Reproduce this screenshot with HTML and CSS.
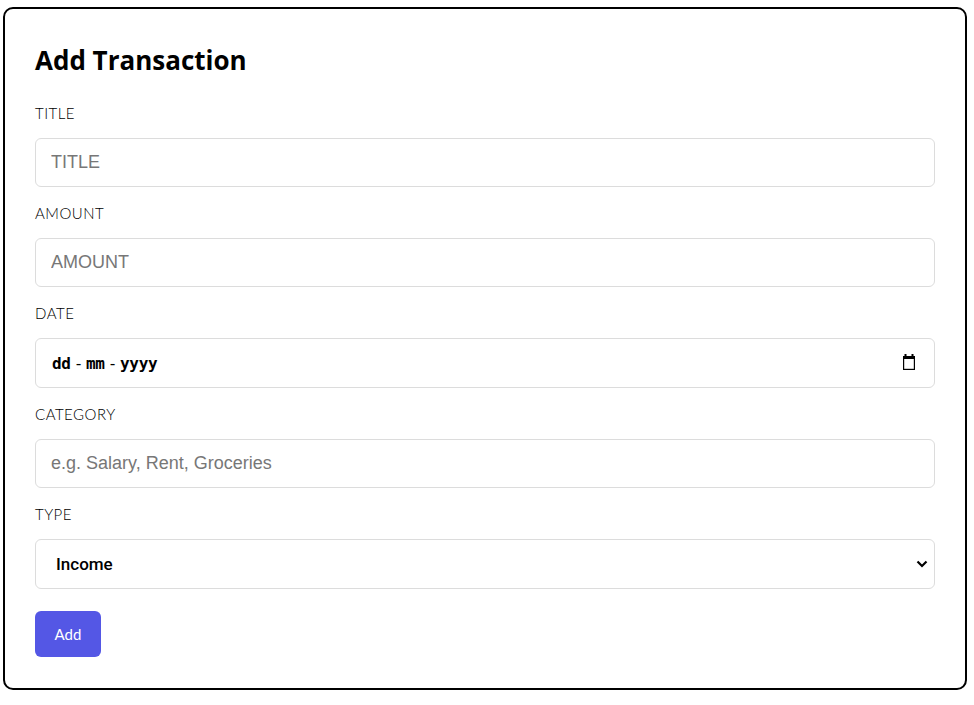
FILE: index.html
```html
<!DOCTYPE html>
<html lang="en">
<head>
<meta charset="utf-8">
<title>Add Transaction</title>
<link rel="stylesheet" href="styles.css">
</head>
<body>
<form class="card">
  <h2 class="card-title">Add Transaction</h2>
  <div class="field">
    <label class="field-label" for="title">TITLE</label>
    <input class="field-input" id="title" type="text" placeholder="TITLE">
  </div>
  <div class="field">
    <label class="field-label" for="amount">AMOUNT</label>
    <input class="field-input" id="amount" type="text" placeholder="AMOUNT">
  </div>
  <div class="field">
    <label class="field-label" for="date">DATE</label>
    <div class="field-input date-box" id="date">
      <span class="date-text"><span>dd</span><span class="date-sep">-</span><span>mm</span><span class="date-sep">-</span><span>yyyy</span></span>
      <svg class="cal-icon" width="14" height="16" viewBox="0 0 14 16" aria-hidden="true">
        <rect x="2.5" y="0" width="2" height="3" fill="#000"/>
        <rect x="9.5" y="0" width="2" height="3" fill="#000"/>
        <rect x="1" y="2" width="12" height="3" fill="#000"/>
        <rect x="1.6" y="2.6" width="10.8" height="12.8" fill="none" stroke="#000" stroke-width="1.2"/>
      </svg>
    </div>
  </div>
  <div class="field">
    <label class="field-label" for="category">CATEGORY</label>
    <input class="field-input" id="category" type="text" placeholder="e.g. Salary, Rent, Groceries">
  </div>
  <div class="field">
    <label class="field-label" for="type">TYPE</label>
    <select class="field-input select-input" id="type">
      <option>Income</option>
      <option>Expense</option>
    </select>
  </div>
  <button class="add-btn" type="button">Add</button>
</form>
</body>
</html>
```
FILE: styles.css
```css
* { box-sizing: border-box; }
html, body { margin: 0; padding: 0; background: #fff; }
body {
  font-family: "Lato", "Liberation Sans", sans-serif;
  color: #000;
  padding: 7px 7px 0 3px;
}
.card {
  border: 2px solid #000;
  border-radius: 10px;
  padding: 30px 30px 31px;
  background: #fff;
}
.card-title {
  margin: 0 0 24px;
  font-family: "Open Sans", "Lato", sans-serif;
  font-size: 26px;
  font-weight: 700;
  line-height: 42px;
  letter-spacing: 0;
}
.field {
  display: flex;
  flex-direction: column;
}
.field-label {
  font-size: 15px;
  font-weight: 300;
  line-height: 17px;
  margin-bottom: 16px;
  letter-spacing: 0.5px;
}
.field-input {
  height: 49px;
  border: 1px solid #dcdcdc;
  border-radius: 6px;
  padding: 0 15px;
  font-family: "Liberation Sans", Arial, sans-serif;
  font-size: 18px;
  color: #000;
  background: #fff;
  margin-bottom: 18px;
  outline: none;
}
.field-input::placeholder { color: #777; }
.date-box {
  height: 50px;
  display: flex;
  align-items: center;
  justify-content: space-between;
  padding: 0 18px 0 16px;
}
.date-text {
  font-family: "DejaVu Sans Mono", "Liberation Mono", monospace;
  font-size: 16px;
  font-weight: 700;
  letter-spacing: -0.3px;
  color: #000;
}
.date-sep { margin: 0 3px; font-weight: 400; }
.cal-icon { display: block; margin-top: -2px; }
.select-input {
  appearance: none;
  -webkit-appearance: none;
  font-family: "Roboto", "Liberation Sans", sans-serif;
  font-weight: 500;
  font-size: 17px;
  padding: 0 40px 0 20px;
  height: 50px;
  background-image: url("data:image/svg+xml;utf8,<svg xmlns='http://www.w3.org/2000/svg' width='12' height='8' viewBox='0 0 12 8'><path d='M1.5 1.5 L6 6 L10.5 1.5' fill='none' stroke='black' stroke-width='2.2'/></svg>");
  background-repeat: no-repeat;
  background-position: right 6px center;
}
.add-btn {
  display: block;
  margin-top: 4px;
  width: 66px;
  height: 46px;
  border: none;
  border-radius: 6px;
  background: #5457e5;
  color: #fff;
  font-family: "Lato", sans-serif;
  font-weight: 400;
  font-size: 15px;
  cursor: pointer;
}
```
